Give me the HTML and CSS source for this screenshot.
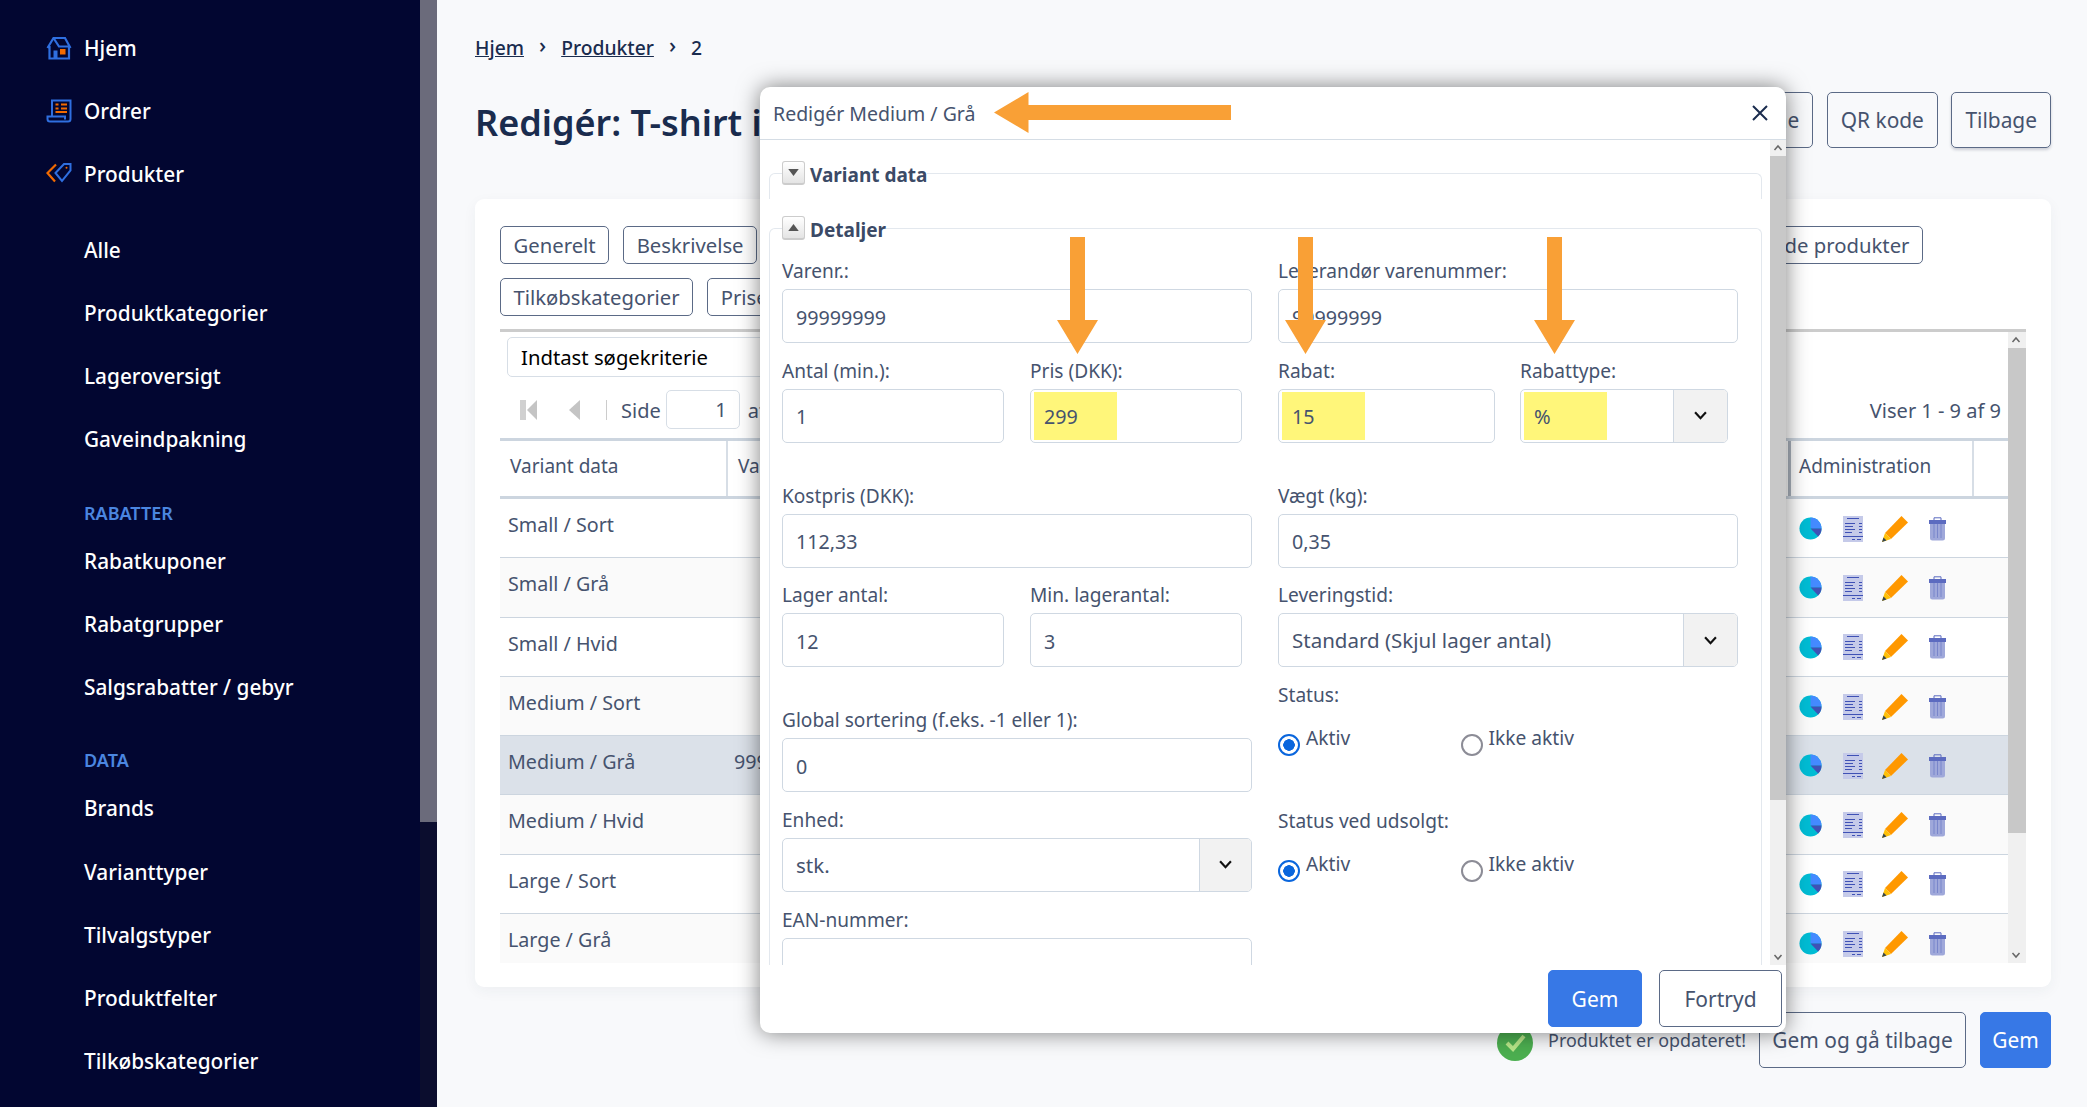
FILE: index.html
```html
<!DOCTYPE html>
<html lang="da">
<head>
<meta charset="utf-8">
<title>Redigér produkt</title>
<link rel="stylesheet" href="styles.css">
</head>
<body>
<svg class="sprite" aria-hidden="true">
  <symbol id="i-pie" viewBox="0 0 24 24">
    <circle cx="12" cy="12" r="11.5" fill="#00bcd4"/>
    <path d="M12 12V.5A11.5 11.5 0 0 1 23.5 12Z" fill="#448aff"/>
    <path d="M12 12H23.5A11.5 11.5 0 0 1 20 20.3Z" fill="#3f51b5"/>
  </symbol>
  <symbol id="i-doc" viewBox="0 0 20 26">
    <rect width="20" height="26" fill="#c5cae9"/>
    <path d="M4 2.500H16M2 7.500H12M16 7.500H19M2 10.500H10M16 10.500H19M2 13.500H12M16 13.500H19M2 16.500H9M16 16.500H19M0 20.500H20M9 23.500H12M14 23.500H18" stroke="#3f51b5" fill="none"/>
  </symbol>
  <symbol id="i-pen" viewBox="0 0 26 26">
    <path d="M19.500 0 26 6.500 9 23 3 17Z" fill="#ff9800"/>
    <path d="M3 17 9 23 0 26Z" fill="#ffc107"/>
    <path d="M1.500 21.500 4.500 24.500 0 26Z" fill="#37474f"/>
  </symbol>
  <symbol id="i-bin" viewBox="0 0 17 24">
    <path d="M1 5H16V21Q16 23.500 13.500 23.500H3.500Q1 23.500 1 21Z" fill="#9fa8da"/>
    <path d="M5 7V21M8.500 7V21M12 7V21" stroke="#7986cb" fill="none"/>
    <path d="M0 3H17V7H0Z" fill="#5c6bc0"/>
    <path d="M5 3V.8H12V3" stroke="#5c6bc0" fill="none"/>
  </symbol>
</svg>

<aside class="sidebar">
  <nav class="nav">
    <a class="nav-item"><svg class="nav-icon" viewBox="0 0 26 24"><path d="M1.500 12 7.500 2H19L24.500 12M3.500 10V22.500H23V10M7.500 2 13 10.500H24" fill="none" stroke="#2f6fe0" stroke-width="2.200"/><path d="M7.500 22.500V14.500H11.500V22.500Z" fill="#2f6fe0"/><rect x="14" y="13" width="5.500" height="5.500" fill="#f26a00"/></svg>Hjem</a>
    <a class="nav-item"><svg class="nav-icon" viewBox="0 0 26 24"><path d="M6 17V1.500H24.500V20Q24.500 22.500 22 22.500H4Q1.500 22.500 1.500 20V17.500H19V20.500" fill="none" stroke="#2f6fe0" stroke-width="2"/><path d="M9.500 5.500H12.500M15 5.500H21M9.500 9.500H12.500M15 9.500H21M9.500 13H21" stroke="#f26a00" stroke-width="2" fill="none"/></svg>Ordrer</a>
    <a class="nav-item"><svg class="nav-icon" viewBox="0 0 26 24"><path d="M9.500 11 18 2H24.500V8.500L16 19Z" fill="none" stroke="#2f6fe0" stroke-width="2"/><circle cx="20.500" cy="5.800" r="1" fill="#f26a00"/><path d="M10 2.500 1.500 11 9 19.500" fill="none" stroke="#f26a00" stroke-width="2.200"/></svg>Produkter</a>
    <div class="nav-sub">
      <a class="nav-item">Alle</a>
      <a class="nav-item">Produktkategorier</a>
      <a class="nav-item">Lageroversigt</a>
      <a class="nav-item">Gaveindpakning</a>
    </div>
    <div class="nav-head nav-head-first">RABATTER</div>
    <a class="nav-item">Rabatkuponer</a>
    <a class="nav-item">Rabatgrupper</a>
    <a class="nav-item">Salgsrabatter / gebyr</a>
    <div class="nav-head">DATA</div>
    <a class="nav-item">Brands</a>
    <a class="nav-item">Varianttyper</a>
    <a class="nav-item">Tilvalgstyper</a>
    <a class="nav-item">Produktfelter</a>
    <a class="nav-item">Tilkøbskategorier</a>
  </nav>
  <div class="side-scroll"><div class="side-thumb"></div></div>
</aside>

<main class="main">
  <div class="crumbs">
    <a class="crumb-link">Hjem</a><span class="crumb-sep">›</span><a class="crumb-link">Produkter</a><span class="crumb-sep">›</span><span>2</span>
  </div>
  <div class="title-row">
    <h1 class="title">Redigér: T-shirt i bomuld</h1>
    <div class="actions">
      <button class="btn btn-lg">Klone</button>
      <button class="btn btn-lg">QR kode</button>
      <button class="btn btn-lg btn-shadow">Tilbage</button>
    </div>
  </div>

  <section class="card">
    <div class="tabs">
      <button class="btn tab">Generelt</button>
      <button class="btn tab">Beskrivelse</button>
      <button class="btn tab">Billeder</button>
      <button class="btn tab tab-end">Relaterede produkter</button>
    </div>
    <div class="tabs tabs-second">
      <button class="btn tab">Tilkøbskategorier</button>
      <button class="btn tab">Priser</button>
    </div>

    <div class="gridbox">
      <div class="grid-main">
        <div class="search">Indtast søgekriterie</div>
        <div class="pager">
          <svg class="pg-first" viewBox="0 0 17 20"><path d="M0 0H6V20H0Z" fill="#d0d0d0"/><path d="M17 0V20L7 10Z" fill="#c4c4c4"/></svg>
          <svg class="pg-prev" viewBox="0 0 11 20"><path d="M11 0V20L0 10Z" fill="#c4c4c4"/></svg>
          <span class="pg-sep"></span>
          <span class="pg-text">Side</span>
          <span class="pg-input">1</span>
          <span class="pg-text">af 1</span>
          <span class="pg-text pg-count">Viser 1 - 9 af 9</span>
        </div>
        <div class="thead">
          <div class="th">Variant data</div>
          <div class="th">Varenummer</div>
          <div class="th th-admin">Administration</div>
          <div class="th th-last"></div>
        </div>
        <div class="tbody">
          <div class="tr"><div class="td">Small / Sort</div><div class="td td2"></div><div class="td-admin"><svg class="ic-pie"><use href="#i-pie"/></svg><svg class="ic-doc"><use href="#i-doc"/></svg><svg class="ic-pen"><use href="#i-pen"/></svg><svg class="ic-bin"><use href="#i-bin"/></svg></div></div>
          <div class="tr"><div class="td">Small / Grå</div><div class="td td2"></div><div class="td-admin"><svg class="ic-pie"><use href="#i-pie"/></svg><svg class="ic-doc"><use href="#i-doc"/></svg><svg class="ic-pen"><use href="#i-pen"/></svg><svg class="ic-bin"><use href="#i-bin"/></svg></div></div>
          <div class="tr"><div class="td">Small / Hvid</div><div class="td td2"></div><div class="td-admin"><svg class="ic-pie"><use href="#i-pie"/></svg><svg class="ic-doc"><use href="#i-doc"/></svg><svg class="ic-pen"><use href="#i-pen"/></svg><svg class="ic-bin"><use href="#i-bin"/></svg></div></div>
          <div class="tr"><div class="td">Medium / Sort</div><div class="td td2"></div><div class="td-admin"><svg class="ic-pie"><use href="#i-pie"/></svg><svg class="ic-doc"><use href="#i-doc"/></svg><svg class="ic-pen"><use href="#i-pen"/></svg><svg class="ic-bin"><use href="#i-bin"/></svg></div></div>
          <div class="tr tr-active"><div class="td">Medium / Grå</div><div class="td td2">99999999</div><div class="td-admin"><svg class="ic-pie"><use href="#i-pie"/></svg><svg class="ic-doc"><use href="#i-doc"/></svg><svg class="ic-pen"><use href="#i-pen"/></svg><svg class="ic-bin"><use href="#i-bin"/></svg></div></div>
          <div class="tr"><div class="td">Medium / Hvid</div><div class="td td2"></div><div class="td-admin"><svg class="ic-pie"><use href="#i-pie"/></svg><svg class="ic-doc"><use href="#i-doc"/></svg><svg class="ic-pen"><use href="#i-pen"/></svg><svg class="ic-bin"><use href="#i-bin"/></svg></div></div>
          <div class="tr"><div class="td">Large / Sort</div><div class="td td2"></div><div class="td-admin"><svg class="ic-pie"><use href="#i-pie"/></svg><svg class="ic-doc"><use href="#i-doc"/></svg><svg class="ic-pen"><use href="#i-pen"/></svg><svg class="ic-bin"><use href="#i-bin"/></svg></div></div>
          <div class="tr"><div class="td">Large / Grå</div><div class="td td2"></div><div class="td-admin"><svg class="ic-pie"><use href="#i-pie"/></svg><svg class="ic-doc"><use href="#i-doc"/></svg><svg class="ic-pen"><use href="#i-pen"/></svg><svg class="ic-bin"><use href="#i-bin"/></svg></div></div>
        </div>
      </div>
      <div class="vscroll vscroll-grid">
        <svg class="sb-arrow" viewBox="0 0 16 16"><path d="M4.500 10 8 6 11.500 10" fill="none" stroke="#666" stroke-width="1.500"/></svg>
        <div class="sb-thumb"></div>
        <svg class="sb-arrow sb-down" viewBox="0 0 16 16"><path d="M4.500 6 8 10 11.500 6" fill="none" stroke="#666" stroke-width="1.500"/></svg>
      </div>
    </div>
  </section>

  <div class="savebar">
    <svg class="ok-icon" viewBox="0 0 36 36"><circle cx="18" cy="18" r="18" fill="#4caf50"/><path d="M10 18 16 24 27 11" fill="none" stroke="#b9e88a" stroke-width="4"/></svg>
    <span class="ok-text">Produktet er opdateret!</span>
    <button class="btn btn-lg btn-save">Gem og gå tilbage</button>
    <button class="btn btn-lg btn-primary">Gem</button>
  </div>
</main>

<div class="modal">
  <header class="modal-head">
    <span class="modal-title">Redigér Medium / Grå</span>
    <svg class="modal-close" viewBox="0 0 16 16"><path d="M1 1 15 15M15 1 1 15" stroke="#1a2c4e" stroke-width="2" fill="none"/></svg>
  </header>
  <div class="modal-body">
    <div class="modal-content">
      <fieldset class="fs fs-closed">
        <legend class="fs-legend"><span class="fs-toggle"><svg class="fs-tri" viewBox="0 0 12 8"><path d="M0 0H12L6 8Z" fill="#555"/></svg></span><span class="fs-name">Variant data</span></legend>
      </fieldset>
      <fieldset class="fs fs-open">
        <legend class="fs-legend"><span class="fs-toggle"><svg class="fs-tri" viewBox="0 0 12 8"><path d="M0 8H12L6 0Z" fill="#555"/></svg></span><span class="fs-name">Detaljer</span></legend>
        <div class="form-cols">
          <div class="form-col form-col-left">
            <div class="field"><label class="lbl">Varenr.:</label><input class="inp" value="99999999"></div>
            <div class="pair">
              <div class="field"><label class="lbl">Antal (min.):</label><input class="inp inp-w1" value="1"></div>
              <div class="field"><label class="lbl">Pris (DKK):</label><div class="inp inp-w2 inp-mark"><span class="mark">299</span></div></div>
            </div>
            <div class="field field-far"><label class="lbl">Kostpris (DKK):</label><input class="inp" value="112,33"></div>
            <div class="pair">
              <div class="field"><label class="lbl">Lager antal:</label><input class="inp inp-w1" value="12"></div>
              <div class="field"><label class="lbl">Min. lagerantal:</label><input class="inp inp-w2" value="3"></div>
            </div>
            <div class="field field-far"><label class="lbl">Global sortering (f.eks. -1 eller 1):</label><input class="inp" value="0"></div>
            <div class="field"><label class="lbl">Enhed:</label><div class="sel"><span class="sel-val">stk.</span><span class="sel-arrow sel-arrow-wide"><svg class="chev" viewBox="0 0 12 8"><path d="M1 1 6 6.500 11 1" fill="none" stroke="#111" stroke-width="2"/></svg></span></div></div>
            <div class="field"><label class="lbl">EAN-nummer:</label><input class="inp" value=""></div>
          </div>
          <div class="form-col form-col-right">
            <div class="field"><label class="lbl">Leverandør varenummer:</label><input class="inp" value="99999999"></div>
            <div class="pair pair-right">
              <div class="field"><label class="lbl">Rabat:</label><div class="inp inp-w3 inp-mark"><span class="mark">15</span></div></div>
              <div class="field"><label class="lbl">Rabattype:</label><div class="sel sel-w4 sel-mark"><span class="mark mark-sel">%</span><span class="sel-arrow"><svg class="chev" viewBox="0 0 12 8"><path d="M1 1 6 6.500 11 1" fill="none" stroke="#111" stroke-width="2"/></svg></span></div></div>
            </div>
            <div class="field field-far"><label class="lbl">Vægt (kg):</label><input class="inp" value="0,35"></div>
            <div class="field"><label class="lbl">Leveringstid:</label><div class="sel"><span class="sel-val">Standard (Skjul lager antal)</span><span class="sel-arrow"><svg class="chev" viewBox="0 0 12 8"><path d="M1 1 6 6.500 11 1" fill="none" stroke="#111" stroke-width="2"/></svg></span></div></div>
            <div class="field"><label class="lbl">Status:</label>
              <div class="radios"><label class="radio"><input class="rad" type="radio" name="s1" checked>Aktiv</label><label class="radio"><input class="rad" type="radio" name="s1">Ikke aktiv</label></div>
            </div>
            <div class="field field-status2"><label class="lbl">Status ved udsolgt:</label>
              <div class="radios"><label class="radio"><input class="rad" type="radio" name="s2" checked>Aktiv</label><label class="radio"><input class="rad" type="radio" name="s2">Ikke aktiv</label></div>
            </div>
          </div>
        </div>
      </fieldset>
    </div>
    <div class="vscroll vscroll-modal">
      <svg class="sb-arrow" viewBox="0 0 16 16"><path d="M4.500 10 8 6 11.500 10" fill="none" stroke="#666" stroke-width="1.500"/></svg>
      <div class="sb-thumb"></div>
      <svg class="sb-arrow sb-down" viewBox="0 0 16 16"><path d="M4.500 6 8 10 11.500 6" fill="none" stroke="#666" stroke-width="1.500"/></svg>
    </div>
  </div>
  <footer class="modal-foot">
    <button class="btn btn-foot btn-primary">Gem</button>
    <button class="btn btn-foot btn-cancel">Fortryd</button>
  </footer>
</div>

<svg class="arrow arrow-left" viewBox="0 0 237 41"><path d="M0 20.500 34.500 0V13H237V28H34.500V41Z" fill="#f9a036"/></svg>
<svg class="arrow arrow-d1" viewBox="0 0 41 117"><path d="M13 0H28V83H41L20.500 117 0 83H13Z" fill="#f9a036"/></svg>
<svg class="arrow arrow-d2" viewBox="0 0 41 117"><path d="M13 0H28V83H41L20.500 117 0 83H13Z" fill="#f9a036"/></svg>
<svg class="arrow arrow-d3" viewBox="0 0 41 117"><path d="M13 0H28V83H41L20.500 117 0 83H13Z" fill="#f9a036"/></svg>
</body>
</html>
```

FILE: styles.css
```css
* { box-sizing: border-box; }
html, body { height: 100%; }
body {
  margin: 0;
  display: flex;
  overflow: hidden;
  background: #f8f9fb;
  color: #46536e;
  font-family: "Noto Sans", "Open Sans", sans-serif;
  font-size: 20px;
}
.sprite { position: absolute; width: 0; height: 0; }

/* sidebar */
.sidebar {
  flex: 0 0 437px;
  height: 1107px;
  display: flex;
  background: #020631;
  overflow: hidden;
}
.nav { flex: 1; padding-top: 16px; }
.nav-item {
  position: relative;
  display: flex;
  align-items: center;
  height: 63.1px;
  padding-left: 84px;
  color: #fff;
  font-size: 20.8px;
  font-weight: 500;
}
.nav-icon { position: absolute; left: 46px; top: 20px; width: 26px; height: 24px; }
.nav-sub { margin-top: 13px; }
.nav-head {
  height: 24px;
  line-height: 24px;
  margin: 29px 0 5px;
  padding-left: 84px;
  color: #4b86e0;
  font-size: 18px;
  font-weight: 600;
}
.nav-head-first { margin-top: 30px; }
.side-scroll { flex: 0 0 17px; background: #0b0d2e; }
.side-thumb { height: 822px; background: #6b6b7b; }

/* main */
.main { flex: 1; padding: 0 36px 0 38px; min-width: 0; }
.crumbs {
  display: flex;
  align-items: center;
  height: 28px;
  margin-top: 33px;
  color: #1a2c4e;
  font-size: 19.3px;
  font-weight: 500;
}
.crumb-link { text-decoration: underline; }
.crumb-sep { margin: 0 15px; font-size: 22px; line-height: 22px; position: relative; top: -3px; }
.title-row {
  display: flex;
  justify-content: space-between;
  align-items: center;
  height: 56px;
  margin-top: 31px;
}
.title { margin: 0; padding-top: 5px; color: #1a2c4e; font-size: 36px; font-weight: 600; }
.actions { display: flex; gap: 13.500px; }

.btn {
  font: inherit;
  color: #46536e;
  background: transparent;
  border: 1px solid #5b6a86;
  border-radius: 5px;
  padding: 0 13px;
  white-space: nowrap;
}
.btn-lg { height: 56px; font-size: 20.900px; }
.btn-shadow { box-shadow: 0 2px 3px rgba(30, 40, 70, .2); }
.btn-primary { background: #3778e6; border-color: #3778e6; color: #fff; }

.card {
  height: 788px;
  margin-top: 51px;
  padding: 27px 25px 25px;
  background: #fff;
  border-radius: 9px;
  box-shadow: 0 4px 14px rgba(40, 50, 80, .05);
}
.tabs { display: flex; gap: 14px; }
.tabs-second { margin-top: 14px; }
.tab { height: 38px; padding: 0 12.500px; font-size: 20.300px; }
.tab-end { margin-left: auto; margin-right: 103px; }

.gridbox {
  display: flex;
  height: 634px;
  margin-top: 13px;
  border-top: 3px solid #ccc;
  overflow: hidden;
}
.grid-main { flex: 0 0 1508px; overflow: hidden; }
.search {
  width: 1240px;
  height: 40px;
  line-height: 38px;
  margin: 5px 0 0 7px;
  padding-left: 13px;
  border: 1px solid #d7dee6;
  border-radius: 5px;
  color: #000;
  font-size: 20.300px;
}
.pager {
  display: flex;
  align-items: center;
  height: 39px;
  margin-top: 13px;
  padding-left: 20px;
}
.pg-text { position: relative; top: 1px; }
.pg-first { width: 17px; height: 20px; }
.pg-prev { width: 11px; height: 20px; margin-left: 32px; }
.pg-sep { width: 1px; height: 20px; margin: 0 14px 0 26px; background: #ccc; }
.pg-input {
  width: 74px;
  height: 39px;
  line-height: 37px;
  margin: 0 8px 0 5px;
  padding-right: 12px;
  text-align: right;
  border: 1px solid #d7dee6;
  border-radius: 5px;
}
.pg-count { margin-left: auto; margin-right: 7px; }

.thead, .tr { display: grid; grid-template-columns: 228px 1fr 186px 34px; }
.thead {
  height: 61px;
  margin-top: 9px;
  border-top: 3px solid #ccd5df;
  border-bottom: 3px solid #ccd5df;
  font-size: 19px;
}
.th {
  padding: 12px 0 0 10px;
  border-right: 2px solid #d7dee6;
}
.th:nth-child(2) { border-right: 0; }
.th-admin { padding-left: 8px; border-left: 3px solid #aab2bd; }
.th-last { border-right: 0; }
.tr { height: 59.3px; border-bottom: 1.5px solid #ccd5df; font-size: 19.700px; }
.tr:nth-child(even) { background: #fafafa; }
.tr-active, .tr-active:nth-child(even) { background: #dbe1e9; }
.td { padding: 12px 0 0 8px; }
.td2 { padding-left: 6px; }
.td-admin { display: flex; align-items: center; padding: 1px 0 0 10px; grid-column: 3 / 5; }
.ic-pie { width: 23px; height: 23px; margin-left: 1px; }
.ic-doc { width: 20px; height: 26px; margin-left: 21px; }
.ic-pen { width: 26px; height: 26px; margin-left: 19px; }
.ic-bin { width: 17px; height: 24px; margin-left: 21px; }

.vscroll { display: flex; flex-direction: column; background: #f0f0f0; flex: 0 0 16px; }
.sb-arrow { flex: 0 0 16px; width: 16px; height: 16px; }
.sb-thumb { background: #c8c8c8; }
.sb-down { margin-top: auto; }
.vscroll-grid .sb-thumb { height: 485px; }
.vscroll-modal .sb-thumb { height: 644px; }
.vscroll-grid { flex-basis: 18px; }

.savebar {
  display: flex;
  align-items: center;
  justify-content: flex-end;
  height: 56px;
  margin-top: 25px;
}
.ok-icon { width: 36px; height: 36px; margin-right: 15px; position: relative; top: 3px; }
.ok-text { font-size: 17.900px; margin-right: 13px; }
.btn-save { width: 207px; padding: 0; margin-right: 14px; }
.savebar .btn-primary { width: 71px; padding: 0; }

/* modal */
.modal {
  position: absolute;
  left: 760px;
  top: 87px;
  width: 1026px;
  height: 946px;
  display: flex;
  flex-direction: column;
  background: #fff;
  border-radius: 10px;
  box-shadow: 0 0 22px rgba(0, 0, 0, .5);
}
.modal-head {
  display: flex;
  align-items: center;
  justify-content: space-between;
  flex: 0 0 53px;
  padding: 0 18px 0 13px;
  border-bottom: 1.500px solid #d5dde5;
  font-size: 19.500px;
}
.modal-close { width: 16px; height: 16px; }
.modal-body { display: flex; height: 825px; overflow: hidden; flex: none; }
.modal-content { flex: 1; padding: 21px 8px 0 9px; overflow: hidden; }
.fs {
  margin: 0;
  padding: 0 12px;
  border: 1px solid #e3e8ee;
  border-bottom: 0;
  border-radius: 6px 6px 0 0;
  min-width: 0;
}
.fs-closed { height: 38px; }
.fs-open { margin-top: 17px; height: 900px; padding-top: 17px; }
.fs-legend {
  display: flex;
  align-items: flex-start;
  padding: 0;
  height: 24px;
  color: #3b4a66;
  font-weight: 700;
  font-size: 19px;
  line-height: 28px;
}
.fs-toggle {
  display: flex;
  align-items: center;
  justify-content: center;
  width: 23px;
  height: 24px;
  margin-right: 5px;
  background: linear-gradient(#fff, #e4e4e4);
  border: 1px solid #ccc;
  border-bottom-width: 2px;
  border-radius: 3px;
}
.fs-tri { width: 11px; height: 7px; }
.form-cols { display: flex; gap: 26px; }
.form-col { display: flex; flex-direction: column; gap: 13.750px; }
.form-col-left { flex: 0 0 470px; }
.form-col-right { flex: 0 0 460px; }
.lbl { display: block; height: 28px; margin-bottom: 4px; line-height: 28px; font-size: 19.100px; }
.field-far { margin-top: 25px; }
.pair { display: flex; gap: 26px; }
.pair-right { gap: 25px; }
.inp {
  display: block;
  width: 100%;
  height: 54px;
  padding: 2px 13px 0;
  font: inherit;
  font-size: 19.700px;
  color: #46536e;
  background: #fff;
  border: 1px solid #cfd8e2;
  border-radius: 5px;
}
.inp-w1 { width: 222px; }
.inp-w2 { width: 212px; }
.inp-w3 { width: 217px; }
.inp-mark { padding: 2px 3px; }
.mark {
  display: block;
  width: 83px;
  height: 48px;
  padding-left: 10px;
  line-height: 50px;
  background: #fff67a;
}
.sel {
  display: flex;
  align-items: stretch;
  height: 54px;
  background: #fff;
  border: 1px solid #cfd8e2;
  border-radius: 5px;
  overflow: hidden;
}
.sel-w4 { width: 208px; }
.sel-mark { padding-left: 3px; }
.mark-sel { flex: none; margin-top: 2px; }
.sel-val { flex: 1; padding-left: 13px; line-height: 52px; font-size: 20.500px; }
.sel-arrow {
  flex: 0 0 54px;
  margin-left: auto;
  display: flex;
  align-items: center;
  justify-content: center;
  background: #f2f2f2;
  border-left: 1px solid #cfd8e2;
}
.sel-arrow-wide { flex-basis: 52px; }
.chev { width: 13px; height: 9px; }
.radios { display: flex; height: 55px; margin-top: 15px; }
.radio { display: flex; align-items: flex-start; width: 182.500px; line-height: 28px; font-size: 19.200px; }
.rad {
  appearance: none;
  width: 22px;
  height: 22px;
  margin: 10px 6px 0 0;
  border: 2.500px solid #8c8c96;
  border-radius: 50%;
  background: #fff;
}
.rad:checked {
  border-color: #0a66dd;
  background: radial-gradient(circle, #0a66dd 0 5.500px, #fff 6px);
}
.field-status2 { margin-top: 14px; }

.modal-foot {
  display: flex;
  justify-content: flex-end;
  gap: 17px;
  padding: 5px 4px 5px 0;
}
.btn-foot { height: 57px; padding: 0; font-size: 21px; }
.modal-foot .btn-primary { width: 94px; }
.btn-cancel { width: 123px; background: #fff; }

/* annotation arrows */
.arrow { position: absolute; }
.arrow-left { left: 994px; top: 92px; width: 237px; height: 41px; }
.arrow-d1, .arrow-d2, .arrow-d3 { top: 237px; width: 41px; height: 117px; }
.arrow-d1 { left: 1057px; }
.arrow-d2 { left: 1285px; }
.arrow-d3 { left: 1534px; }
```
